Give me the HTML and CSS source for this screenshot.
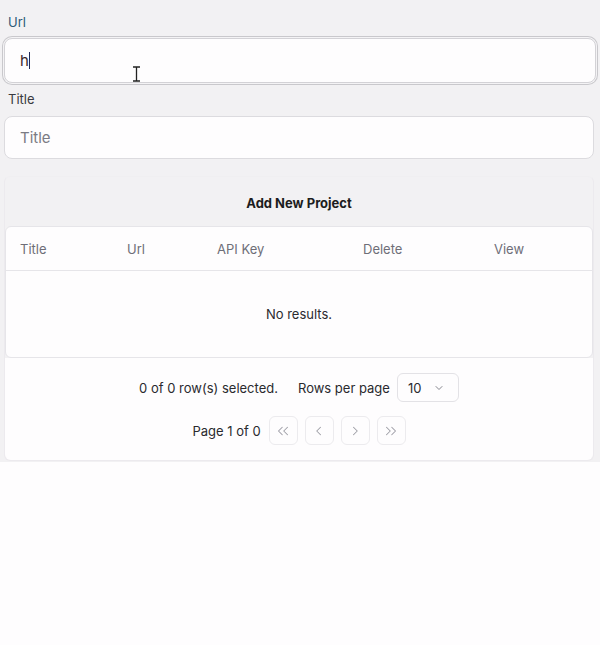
FILE: index.html
```html
<!DOCTYPE html>
<html>
<head>
<meta charset="utf-8">
<link rel="stylesheet" href="styles.css">
</head>
<body>
<div class="top">
  <div class="field">
    <label class="label label-focus">Url</label>
    <div class="input input-focus"><span class="typed">h</span><span class="caret"></span></div>
  </div>
  <div class="field field-title">
    <label class="label">Title</label>
    <div class="input input-plain"><span class="placeholder">Title</span></div>
  </div>
  <div class="card">
    <div class="card-title">Add New Project</div>
    <div class="table">
      <div class="thead">
        <span class="th th-title">Title</span>
        <span class="th th-url">Url</span>
        <span class="th th-key">API Key</span>
        <span class="th th-del">Delete</span>
        <span class="th th-view">View</span>
      </div>
      <div class="empty">No results.</div>
    </div>
    <div class="footer">
      <div class="frow">
        <span class="sel">0 of 0 row(s) selected.</span>
        <span class="rpp">Rows per page</span>
        <div class="select"><span>10</span>
          <svg width="12" height="12" viewBox="0 0 24 24" fill="none" stroke="#85858d" stroke-width="2" stroke-linecap="round" stroke-linejoin="round"><path d="M6 9l6 6 6-6"/></svg>
        </div>
      </div>
      <div class="frow frow2">
        <span class="page">Page 1 of 0</span>
        <div class="pbtn"><svg width="18" height="18" viewBox="0 0 24 24" fill="none" stroke="#9e9ea6" stroke-width="1.4" stroke-linecap="round" stroke-linejoin="round"><path d="M11 17l-5-5 5-5M18 17l-5-5 5-5"/></svg></div>
        <div class="pbtn"><svg width="18" height="18" viewBox="0 0 24 24" fill="none" stroke="#9e9ea6" stroke-width="1.4" stroke-linecap="round" stroke-linejoin="round"><path d="M14 17l-5-5 5-5"/></svg></div>
        <div class="pbtn"><svg width="18" height="18" viewBox="0 0 24 24" fill="none" stroke="#9e9ea6" stroke-width="1.4" stroke-linecap="round" stroke-linejoin="round"><path d="M10 17l5-5-5-5"/></svg></div>
        <div class="pbtn"><svg width="18" height="18" viewBox="0 0 24 24" fill="none" stroke="#9e9ea6" stroke-width="1.4" stroke-linecap="round" stroke-linejoin="round"><path d="M13 17l5-5-5-5M6 17l5-5-5-5"/></svg></div>
      </div>
    </div>
  </div>
  <svg class="ibeam" width="9" height="16" viewBox="0 0 9 16"><path d="M1 1h7M4.5 1v14M1 15h7" stroke="#222" stroke-width="1.3" fill="none"/></svg>
</div>
</body>
</html>
```

FILE: styles.css
```css
* { box-sizing: border-box; }
body {
  margin: 0;
  background: #fefdfe;
  font-family: Inter, "Noto Sans", sans-serif;
  color: #27272a;
}
.top {
  position: relative;
  background: #f2f1f3;
  height: 462px;
  padding: 14px 0 0 0;
}
.field { display: flex; flex-direction: column; }
.label {
  font-size: 13px;
  line-height: 16px;
  color: #3a3a40;
  padding-left: 8px;
}
.label-focus { color: #2e5a78; }
.input {
  background: #fefdfe;
  display: flex;
  align-items: center;
  font-size: 15px;
}
.input-focus {
  margin: 8px 4px 0 4px;
  height: 45px;
  border: 1px solid #d3d2d6;
  border-radius: 8px;
  box-shadow: 0 0 0 1px #f4f3f5, 0 0 0 2px #c9c8cc;
  padding-left: 15px;
}
.typed { color: #3b2a2a; }
.caret {
  display: inline-block;
  width: 1px;
  height: 17px;
  background: #1f2a5a;
}
.field-title { margin-top: 8px; }
.input-plain {
  margin: 9px 6px 0 4px;
  height: 43px;
  border: 1px solid #dcdbdf;
  border-radius: 8px;
  padding-left: 15px;
}
.placeholder { color: #7b7b83; }
.card {
  margin: 17px 6px 0 4px;
  height: 285px;
  border: 1px solid #eceaee;
  border-top-color: #f0eff1;
  border-radius: 6px;
  display: flex;
  flex-direction: column;
}
.card-title {
  text-align: center;
  font-size: 13px;
  font-weight: 700;
  color: #1c1c20;
  padding-top: 18px;
  height: 49px;
}
.table {
  background: #fefdfe;
  border: 1px solid #e6e5e9;
  border-radius: 6px;
}
.thead {
  height: 44px;
  border-bottom: 1px solid #e6e5e9;
  display: grid;
  grid-template-columns: 107px 90px 146px 131px 1fr;
  align-items: center;
  padding-left: 14px;
}
.th {
  font-size: 13px;
  color: #6e6e78;
}
.empty {
  height: 86px;
  display: flex;
  align-items: center;
  justify-content: center;
  font-size: 13px;
  color: #2a2a2e;
}
.footer {
  flex: 1;
  background: #fefdfe;
  border-radius: 0 0 6px 6px;
  display: flex;
  flex-direction: column;
  align-items: center;
  padding-top: 15px;
}
.frow {
  display: flex;
  align-items: center;
  font-size: 13px;
  color: #2a2a2e;
}
.sel { margin-right: 20px; }
.rpp { margin-right: 7px; }
.select {
  width: 62px;
  height: 29px;
  border: 1px solid #e3e2e6;
  border-radius: 6px;
  display: flex;
  align-items: center;
  justify-content: space-between;
  padding: 0 13px 0 10px;
}
.frow2 { margin-top: 14px; }
.page { margin-right: 8px; }
.pbtn {
  width: 29px;
  height: 29px;
  border: 1px solid #ecebee;
  border-radius: 6px;
  display: flex;
  align-items: center;
  justify-content: center;
  margin-right: 7px;
}
.pbtn:last-child { margin-right: 0; }
.ibeam {
  position: absolute;
  left: 132px;
  top: 66px;
}
```
